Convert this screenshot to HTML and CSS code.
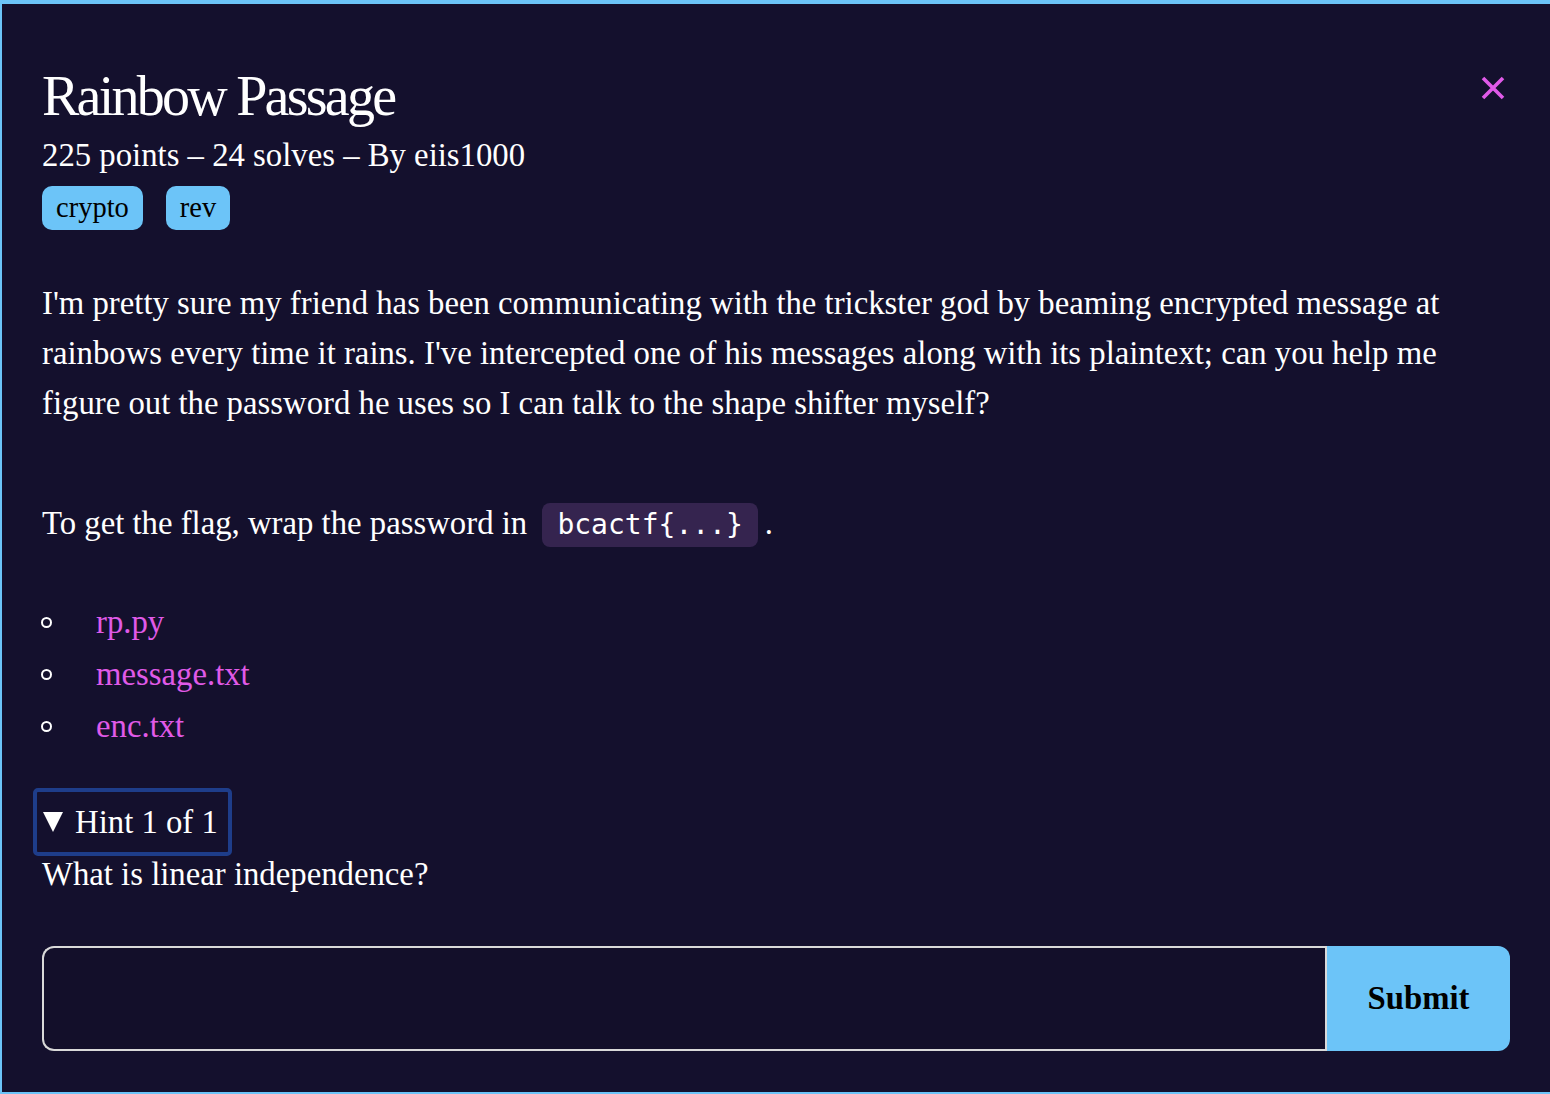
FILE: index.html
```html
<!DOCTYPE html>
<html lang="en">
<head>
<meta charset="utf-8">
<title>Rainbow Passage</title>
<link rel="stylesheet" href="styles.css">
</head>
<body>
<div class="modal">
  <button class="close" aria-label="Close">
    <svg width="24" height="24" viewBox="0 0 24 24"><path d="M2 2 L22 22 M22 2 L2 22" stroke="#e05ae8" stroke-width="3.6" stroke-linecap="butt"/></svg>
  </button>
  <h1 class="title">Rainbow Passage</h1>
  <div class="meta">225 points – 24 solves – By eiis1000</div>
  <div class="tags">
    <span class="tag">crypto</span>
    <span class="tag">rev</span>
  </div>
  <p class="desc">I'm pretty sure my friend has been communicating with the trickster god by beaming encrypted message at rainbows every time it rains. I've intercepted one of his messages along with its plaintext; can you help me figure out the password he uses so I can talk to the shape shifter myself?</p>
  <p class="desc flag">To get the flag, wrap the password in <code class="code">bcactf{...}</code>.</p>
  <ul class="files">
    <li><span class="bullet"></span><a href="#">rp.py</a></li>
    <li><span class="bullet"></span><a href="#">message.txt</a></li>
    <li><span class="bullet"></span><a href="#">enc.txt</a></li>
  </ul>
  <div class="hint">
    <div class="summary"><span class="tri"></span>Hint 1 of 1</div>
    <div class="hint-text">What is linear independence?</div>
  </div>
  <form class="submit-row">
    <input class="flag-input" type="text">
    <button class="submit" type="button">Submit</button>
  </form>
</div>
</body>
</html>
```

FILE: styles.css
```css
html, body {
  margin: 0;
  padding: 0;
  background: #14102d;
}
body {
  font-family: "Liberation Serif", "Times New Roman", serif;
  color: #ffffff;
  width: 1550px;
  height: 1094px;
  overflow: hidden;
}
.modal {
  position: relative;
  box-sizing: border-box;
  height: 1094px;
  width: 1550px;
  border-top: 4px solid #6cc4f8;
  border-left: 2px solid #6cc4f8;
  border-bottom: 2px solid #6cc4f8;
  background: #14102d;
  padding: 60px 40px 0 40px;
}
.close {
  position: absolute;
  top: 72px;
  right: 45px;
  background: none;
  border: 0;
  padding: 0;
  width: 24px;
  height: 24px;
  cursor: pointer;
}
.close svg { display: block; }
.title {
  margin: 0;
  font-size: 56px;
  font-weight: 400;
  letter-spacing: -2.75px;
  line-height: 64px;
}
.meta {
  font-size: 32.75px;
  line-height: 40px;
  margin-top: 7px;
}
.tags {
  display: flex;
  gap: 23px;
  margin-top: 11px;
}
.tag {
  background: #6cc4f8;
  color: #000;
  font-size: 28.5px;
  line-height: 44px;
  height: 44px;
  padding: 0 14px;
  border-radius: 10px;
}
.desc {
  font-size: 32.75px;
  line-height: 50px;
  margin: 48px 0 0 0;
  max-width: 1450px;
}
.desc.flag {
  margin-top: 70px;
}
.code {
  font-family: "DejaVu Sans Mono", monospace;
  font-size: 28px;
  background: #35244f;
  border-radius: 8px;
  padding: 5px 15px 6px;
  margin: 0 7px;
}
.files {
  list-style: none;
  margin: 46px 0 0 0;
  padding: 0;
  font-size: 32.75px;
  line-height: 52px;
}
.files li {
  display: flex;
  align-items: center;
}
.bullet {
  box-sizing: border-box;
  width: 11px;
  height: 11px;
  border: 2px solid #ffffff;
  border-radius: 50%;
  margin-left: -1px;
  margin-right: 44px;
  flex: none;
}
.files a {
  color: #e05ae8;
  text-decoration: none;
}
.hint {
  margin-top: 36px;
  font-size: 32.75px;
}
.summary {
  display: inline-flex;
  align-items: center;
  gap: 12px;
  box-sizing: border-box;
  height: 68px;
  margin-left: -9px;
  padding: 0 10px 0 6px;
  border: 4px solid #1e3d8a;
  border-radius: 5px;
  line-height: 40px;
}
.tri {
  width: 0;
  height: 0;
  border-left: 10px solid transparent;
  border-right: 10px solid transparent;
  border-top: 20px solid #ffffff;
}
.hint-text {
  line-height: 36px;
  margin-top: 0;
}
.submit-row {
  display: flex;
  margin: 54px 0 0 0;
  width: 1468px;
  height: 105px;
}
.flag-input {
  flex: 1;
  box-sizing: border-box;
  height: 105px;
  background: #130f2a;
  border: 2px solid #d9d9d9;
  border-right: 0;
  border-radius: 12px 0 0 12px;
  margin: 0;
  outline: none;
}
.submit {
  width: 185px;
  height: 105px;
  background: #6cc4f8;
  border: 0;
  border-left: 2px solid #d9d9d9;
  border-radius: 0 12px 12px 0;
  font-family: "Liberation Serif", "Times New Roman", serif;
  font-weight: 700;
  font-size: 32.75px;
  color: #000;
  margin: 0;
}
```
